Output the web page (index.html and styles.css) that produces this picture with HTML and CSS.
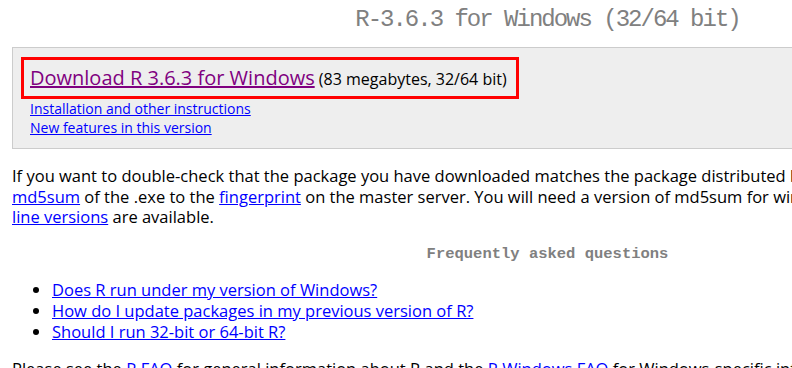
FILE: index.html
```html
<!DOCTYPE html>
<html lang="en">
<head>
  <meta charset="UTF-8">
  <title>R-3.6.3 for Windows (32/64 bit)</title>
  <link rel="stylesheet" href="styles.css">
</head>
<body>
  <div class="page">
    <h1 class="page-title">R-3.6.3 for Windows (32/64 bit)</h1>

    <div class="download-box">
      <div class="highlight">
        <a class="main-link" href="#">Download R 3.6.3 for Windows</a>
        <span class="size-note">(83 megabytes, 32/64 bit)</span>
      </div>
      <a class="box-link" href="#">Installation and other instructions</a>
      <a class="box-link" href="#">New features in this version</a>
    </div>

    <p class="intro">
      If you want to double-check that the package you have downloaded matches the package distributed by CRAN, you can compare the
      <a href="#">md5sum</a> of the .exe to the <a href="#">fingerprint</a> on the master server. You will need a version of md5sum for windows: both
      <a href="#">graphical</a> and <a href="#">command line versions</a> are available.
    </p>

    <h3 class="faq-title">Frequently asked questions</h3>

    <ul class="faq-list">
      <li><a href="#">Does R run under my version of Windows?</a></li>
      <li><a href="#">How do I update packages in my previous version of R?</a></li>
      <li><a href="#">Should I run 32-bit or 64-bit R?</a></li>
    </ul>

    <p class="more">
      Please see the <a href="#">R FAQ</a> for general information about R and the <a href="#">R Windows FAQ</a> for Windows-specific information.
    </p>
  </div>
</body>
</html>
```

FILE: styles.css
```css
html, body {
  overflow: hidden;
}
body {
  margin: 0;
  background: #ffffff;
  font-family: 'Open Sans', 'Noto Sans', Arial, sans-serif;
  color: #000000;
}
a {
  color: #0000ff;
}
.page {
  width: 1071px;
  padding: 0 12px;
}
.page-title {
  margin: 0;
  padding-top: 6px;
  height: 41px;
  text-align: center;
  font-family: 'Liberation Mono', monospace;
  font-size: 24px;
  letter-spacing: -2px;
  font-weight: normal;
  color: #808080;
}
.download-box {
  background: #eeeeee;
  border: 1px solid #cccccc;
  padding: 9px 8px 11px;
}
.highlight {
  display: inline-block;
  border: 3px solid #ff0000;
  padding: 5px 9px 4px 6px;
  line-height: 26px;
}
.main-link {
  color: #800080;
  font-size: 20px;
}
.size-note {
  font-size: 16px;
}
.box-link {
  display: block;
  margin-left: 9px;
  font-size: 14px;
  line-height: 19px;
}
.intro {
  margin: 17px 0 0;
  font-size: 16.5px;
  line-height: 20.5px;
}
.faq-title {
  margin: 17px 0 0;
  text-align: center;
  font-family: 'Liberation Mono', monospace;
  font-size: 15.5px;
  color: #808080;
}
.faq-list {
  margin: 16px 0 0;
  padding-left: 40px;
  font-size: 16.5px;
  line-height: 21px;
}
.more {
  margin: 16px 0 0;
  font-size: 16.5px;
  line-height: 21px;
}
```
